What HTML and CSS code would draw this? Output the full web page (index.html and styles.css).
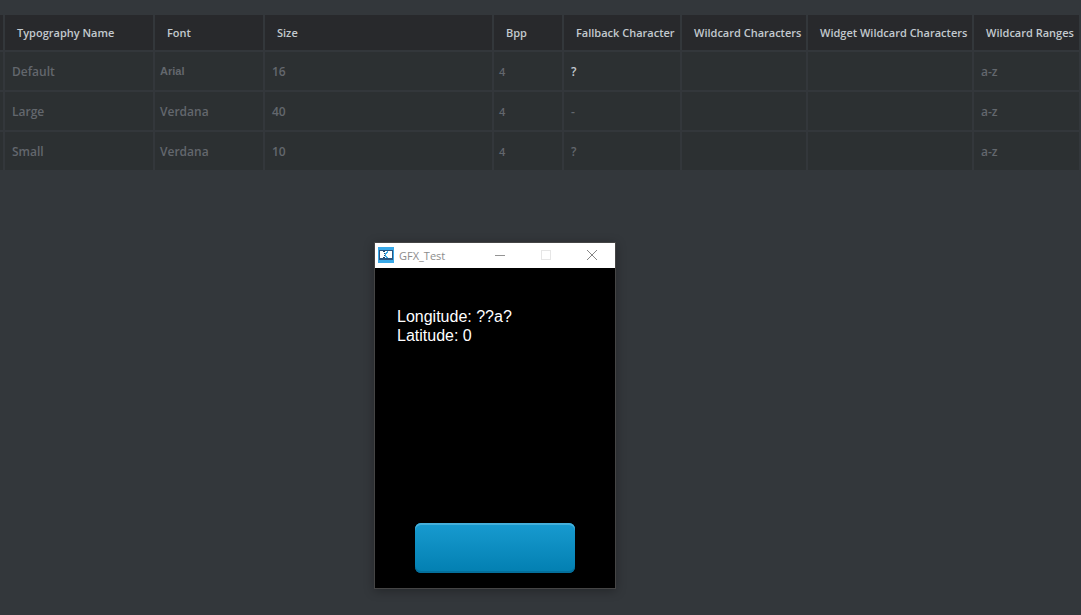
FILE: index.html
```html
<!DOCTYPE html>
<html lang="en">
<head>
    <meta charset="utf-8">
    <title>Typographies</title>
    <meta name="viewport" content="width=device-width, initial-scale=1.0">
    <link rel="stylesheet" href="styles.css">
</head>
<body>
    <table class="typographies">
        <colgroup>
            <col class="col-handle">
            <col class="col-name">
            <col class="col-font">
            <col class="col-size">
            <col class="col-bpp">
            <col class="col-fallback">
            <col class="col-wildcard">
            <col class="col-widget">
            <col class="col-ranges">
        </colgroup>
        <thead>
            <tr>
                <td></td>
                <th>Typography Name</th>
                <th>Font</th>
                <th>Size</th>
                <th>Bpp</th>
                <th>Fallback Character</th>
                <th>Wildcard Characters</th>
                <th>Widget Wildcard Characters</th>
                <th>Wildcard Ranges</th>
            </tr>
        </thead>
        <tbody>
            <tr>
                <td></td>
                <td>Default</td>
                <td class="font-name arial">Arial</td>
                <td>16</td>
                <td class="bpp">4</td>
                <td class="edited">?</td>
                <td></td>
                <td></td>
                <td>a-z</td>
            </tr>
            <tr>
                <td></td>
                <td>Large</td>
                <td class="font-name">Verdana</td>
                <td>40</td>
                <td class="bpp">4</td>
                <td>-</td>
                <td></td>
                <td></td>
                <td>a-z</td>
            </tr>
            <tr>
                <td></td>
                <td>Small</td>
                <td class="font-name">Verdana</td>
                <td>10</td>
                <td class="bpp">4</td>
                <td>?</td>
                <td></td>
                <td></td>
                <td>a-z</td>
            </tr>
        </tbody>
    </table>

    <div class="window">
        <div class="titlebar">
            <svg class="app-icon" width="16" height="16" viewBox="0 0 16 16" shape-rendering="crispEdges">
                <rect width="16" height="16" fill="#39a9e8"/>
                <rect x="1" y="3" width="14" height="10" fill="#2b5580"/>
                <rect x="2" y="4" width="12" height="7" fill="#fff"/>
                <path d="M5 4h2v1H5zM6 6h1v1H6zM6 8h1v1H6zM5 10h2v1H5z" fill="#23466f"/>
                <path d="M9 4h1v2H9v1H8v2h1v1h1v1H8v-1H7V6h1V5h1z" fill="#39a9e8"/>
            </svg>
            <span class="title">GFX_Test</span>
            <div class="window-controls">
                <button type="button" aria-label="Minimize">
                    <svg width="10" height="10" viewBox="0 0 10 10"><path d="M0 5.5h10" stroke="#949494"/></svg>
                </button>
                <button type="button" aria-label="Maximize" disabled>
                    <svg width="10" height="10" viewBox="0 0 10 10"><rect x=".5" y=".5" width="9" height="9" fill="none" stroke="#e6e6e6"/></svg>
                </button>
                <button type="button" aria-label="Close">
                    <svg width="10" height="10" viewBox="0 0 10 10"><path d="M0 0l10 10M10 0L0 10" stroke="#858585"/></svg>
                </button>
            </div>
        </div>
        <div class="screen">
            <p class="readout">Longitude: ??a?<br>Latitude: 0</p>
            <button type="button" class="screen-button" aria-label="Update"></button>
        </div>
    </div>
</body>
</html>
```
FILE: styles.css
```css
* {
    box-sizing: border-box;
}

body {
    margin: 0;
    padding-top: 15px;
    min-height: 100vh;
    position: relative;
    background: #33373b;
    color: #63676d;
    font-family: "Open Sans", sans-serif;
    font-size: 12px;
}

/* Typography table */
.typographies {
    width: 100%;
    table-layout: fixed;
    border-collapse: separate;
    border-spacing: 0;
}

.col-handle {
    width: 5px;
}

.col-name {
    width: 150px;
}

.col-font {
    width: 110px;
}

.col-bpp {
    width: 70px;
}

.col-fallback {
    width: 118px;
}

.col-wildcard {
    width: 126px;
}

.col-widget {
    width: 166px;
}

.col-ranges {
    width: 107px;
}

.typographies th,
.typographies td {
    height: 40px;
    padding: 0 0 0 7px;
    border-right: 2px solid #33373b;
    border-bottom: 2px solid #33373b;
    background: #2c3032;
    text-align: left;
    white-space: nowrap;
    font-weight: 550;
}

.typographies thead th,
.typographies thead td {
    height: 37px;
    background: #28292c;
}

.typographies th {
    padding-left: 12px;
    color: #c3c9cf;
    font-size: 11px;
    font-weight: 600;
}

.typographies td:first-child {
    padding: 0;
}

.typographies .font-name {
    padding-left: 5px;
    font-weight: 600;
}

.typographies .arial {
    font-family: "Liberation Sans", sans-serif;
    font-size: 11px;
}

.typographies .bpp {
    padding-left: 5px;
    font-size: 11px;
}

.typographies .edited {
    color: #c3c9cf;
    font-weight: 600;
}

/* Simulator window */
.window {
    position: absolute;
    left: 374px;
    top: 242px;
    width: 242px;
    border: 1px solid #454545;
    background: #000;
    box-shadow: 0 2px 10px rgba(0, 0, 0, 0.3);
}

.titlebar {
    display: flex;
    align-items: center;
    height: 25px;
    padding: 0 0 1px 3px;
    background: #fff;
}

.title {
    margin-left: 5px;
    color: #8c8c8c;
    font-size: 11px;
}

.window-controls {
    display: flex;
    margin-left: auto;
    height: 100%;
}

.window-controls button {
    display: flex;
    align-items: center;
    justify-content: center;
    width: 46px;
    padding: 0;
    border: 0;
    background: none;
}

.screen {
    display: flex;
    flex-direction: column;
    justify-content: space-between;
    height: 320px;
    padding: 39px 40px 15px 22px;
}

.readout {
    margin: 0;
    color: #fff;
    font-family: "Liberation Sans", Arial, sans-serif;
    font-size: 16px;
    line-height: 19px;
}

.screen-button {
    align-self: flex-end;
    width: 160px;
    height: 50px;
    border: 0;
    border-radius: 6px;
    background: linear-gradient(#189bd0, #027fb1);
    box-shadow: inset 0 2px 0 #45b0db, inset 0 -2px 0 #046f9b;
}
```
